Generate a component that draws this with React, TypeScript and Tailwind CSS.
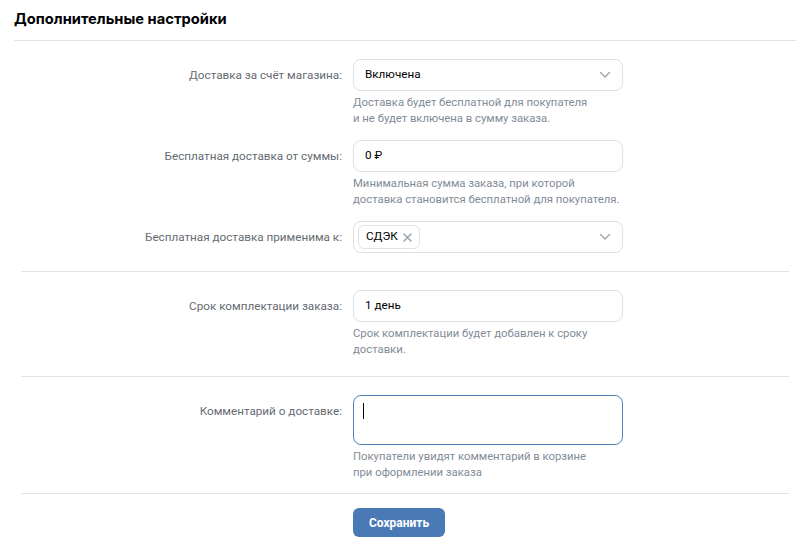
import React from "react";

const Chevron = () => (
  <svg width="12" height="8" viewBox="0 0 12 8" fill="none" className="shrink-0">
    <path d="M1.5 1.5 6 6l4.5-4.5" stroke="#99a2ad" strokeWidth="1.4" strokeLinecap="round" strokeLinejoin="round" />
  </svg>
);

const Hint = ({ children }: { children: React.ReactNode }) => (
  <div className="mt-[4px] text-[11.3px] leading-[16px] text-[#818c99]">{children}</div>
);

const Row = ({ label, children, hint }: { label: string; children: React.ReactNode; hint?: React.ReactNode }) => (
  <div className="flex items-start">
    <div className="w-[332px] shrink-0 pr-[11px] pt-[7px] text-right text-[11.7px] leading-[18px] text-[#656b72]">{label}</div>
    <div className="w-[270px]">
      {children}
      {hint && <Hint>{hint}</Hint>}
    </div>
  </div>
);

const Box = ({ children, className = "" }: { children: React.ReactNode; className?: string }) => (
  <div className={`flex h-[32px] items-center rounded-[8px] border border-[#dce1e6] bg-white px-[11px] text-[11.7px] text-black ${className}`}>
    {children}
  </div>
);

export default function App() {
  return (
    <div className="w-[808px] h-[559px] bg-white" style={{ fontFamily: "Roboto, 'Noto Sans', sans-serif" }}>
      <div className="ml-[14px] mr-[12px] flex h-[41px] items-center border-b border-[#e1e3e6] pb-[2px]">
        <h1 className="text-[14.7px] font-bold text-black" style={{ fontFamily: "Inter, Roboto, sans-serif" }}>
          Дополнительные настройки
        </h1>
      </div>
      <div className="ml-[21px] mr-[19px]">
        <div className="flex flex-col gap-[13px] border-b border-[#e1e3e6] pt-[18px] pb-[18px]">
          <Row
            label="Доставка за счёт магазина:"
            hint={
              <>
                Доставка будет бесплатной для покупателя
                <br />и не будет включена в сумму заказа.
              </>
            }
          >
            <Box className="justify-between">
              <span>Включена</span>
              <Chevron />
            </Box>
          </Row>
          <Row
            label="Бесплатная доставка от суммы:"
            hint={
              <>
                Минимальная сумма заказа, при которой
                <br />
                доставка становится бесплатной для покупателя.
              </>
            }
          >
            <Box>
              <span>0 ₽</span>
            </Box>
          </Row>
          <Row label="Бесплатная доставка применима к:">
            <Box className="justify-between pl-[4px]">
              <span className="flex h-[24px] items-center gap-[5px] rounded-[6px] border border-[#e1e3e6] px-[7px]">
                СДЭК
                <svg width="9" height="9" viewBox="0 0 9 9">
                  <path d="M1 1l7 7M8 1 1 8" stroke="#99a2ad" strokeWidth="1.5" strokeLinecap="round" />
                </svg>
              </span>
              <Chevron />
            </Box>
          </Row>
        </div>
        <div className="border-b border-[#e1e3e6] pt-[18px] pb-[18px]">
          <Row
            label="Срок комплектации заказа:"
            hint={
              <>
                Срок комплектации будет добавлен к сроку
                <br />
                доставки.
              </>
            }
          >
            <Box>
              <span>1 день</span>
            </Box>
          </Row>
        </div>
        <div className="border-b border-[#e1e3e6] pt-[18px] pb-[12px]">
          <Row
            label="Комментарий о доставке:"
            hint={
              <>
                Покупатели увидят комментарий в корзине
                <br />
                при оформлении заказа
              </>
            }
          >
            <div className="h-[50px] rounded-[8px] border border-[#5181b8] bg-white px-[9px] pt-[7px]">
              <div className="h-[16px] w-[1px] bg-black" />
            </div>
          </Row>
        </div>
        <div className="flex pt-[14px]">
          <div className="w-[332px] shrink-0" />
          <button className="h-[29px] rounded-[6px] bg-[#4a7ab6] px-[16px] text-[12px] font-bold text-white">
            Сохранить
          </button>
        </div>
      </div>
    </div>
  );
}
